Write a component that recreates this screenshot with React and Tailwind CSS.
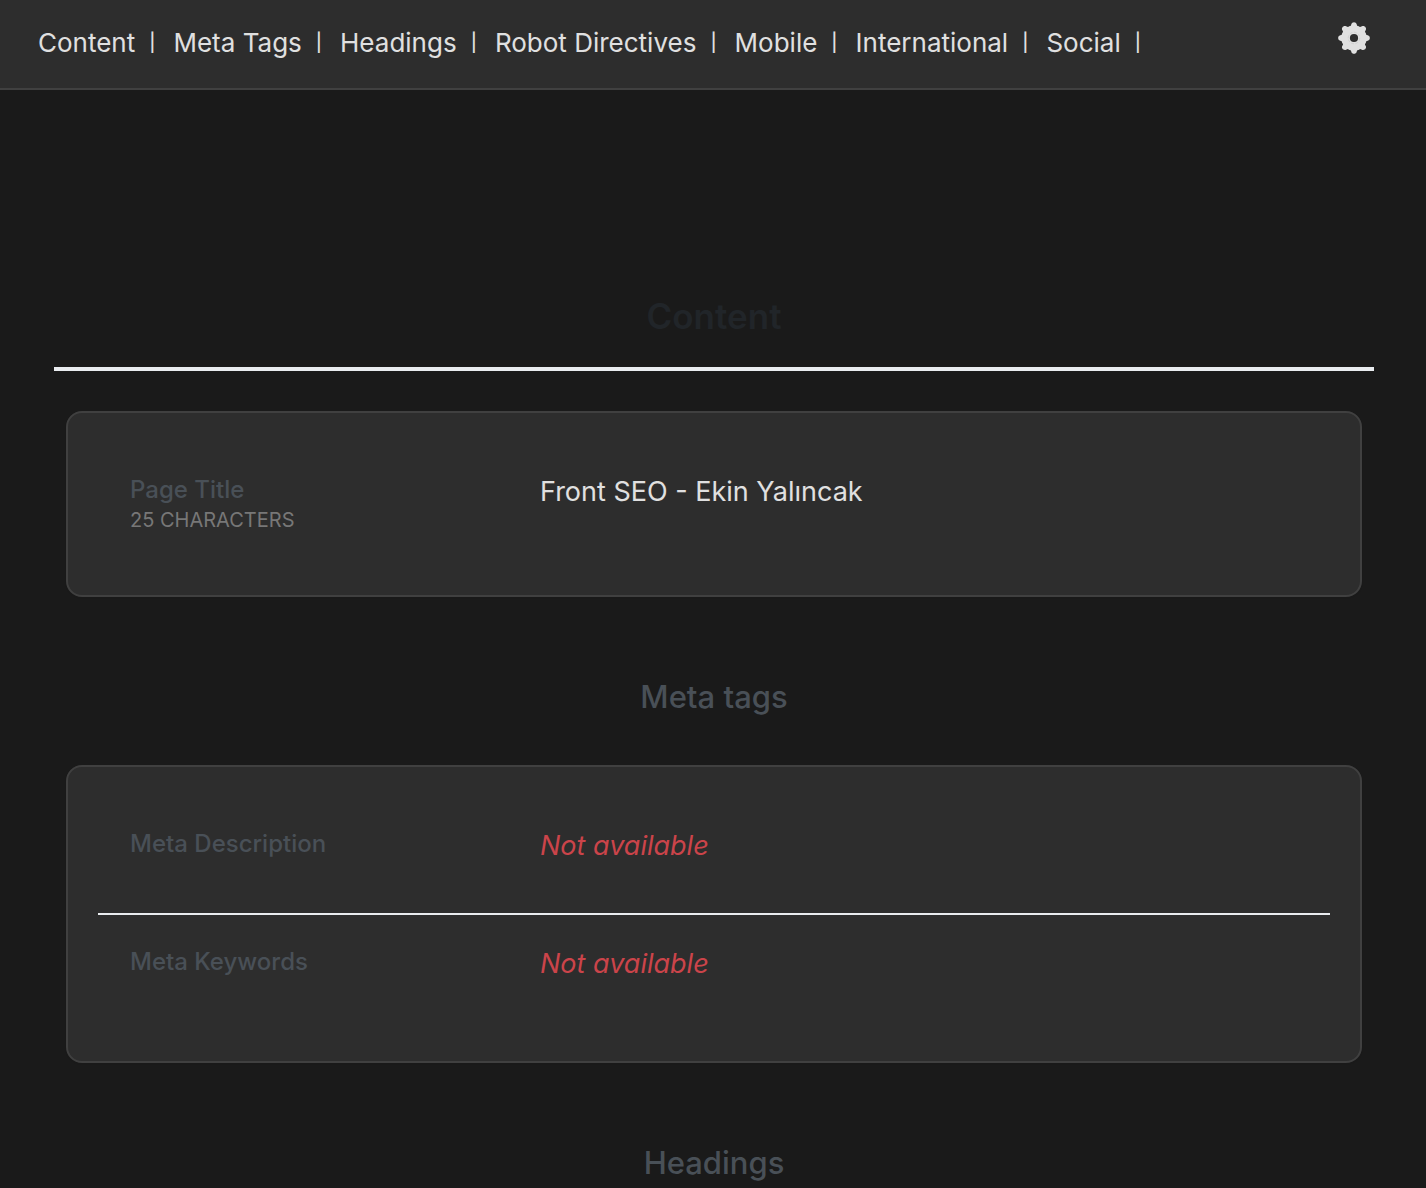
const NAV_ITEMS = [
  { href: '#content', label: 'Content' },
  { href: '#meta-tags', label: 'Meta Tags' },
  { href: '#headings', label: 'Headings' },
  { href: '#robots', label: 'Robot Directives' },
  { href: '#mobile', label: 'Mobile' },
  { href: '#international', label: 'International' },
  { href: '#social', label: 'Social' },
]

const TEETH = [0, 45, 90, 135, 180, 225, 270, 315]

function GearIcon() {
  return (
    <svg viewBox="0 0 32 32" className="size-8" aria-hidden="true">
      <g fill="#e0e0e0">
        {TEETH.map((deg) => (
          <path key={deg} transform={`rotate(${deg} 16 16)`} d="M10.5 5 C12.5 4.6 13 3.8 13.3 2.2 C13.9 -0.5 18.1 -0.5 18.7 2.2 C19 3.8 19.5 4.6 21.5 5 L16 16 Z" />
        ))}
        <circle cx="16" cy="16" r="12.6" />
      </g>
      <circle cx="16" cy="16" r="5.8" fill="none" stroke="#c0c0c0" strokeWidth="0.5" strokeDasharray="3 1.4" />
      <circle cx="16" cy="16" r="4.1" fill="#2d2d2d" />
    </svg>
  )
}

function Card({ children }) {
  return (
    <dl className="mx-3 rounded-2xl border-2 border-[#404040] bg-[#2d2d2d] px-[30px] py-[60px] shadow-xs">
      {children}
    </dl>
  )
}

function Row({ label, note, children }) {
  return (
    <div className="flex min-h-14 px-8 pt-px">
      <dt className="w-[410px] shrink-0 text-2xl font-medium text-[#495057]">
        {label}
        {note && <span className="block text-xl leading-[29px] font-normal text-[#777777] uppercase">{note}</span>}
      </dt>
      <dd className="min-w-0 flex-1 text-[27px] leading-9 text-[#e0e0e0]">{children}</dd>
    </div>
  )
}

function Missing() {
  return <em className="text-[#cb444a]">Not available</em>
}

export default function App() {
  return (
    <div className="min-h-screen bg-[#1a1a1a] font-['Inter',sans-serif] text-[#e0e0e0]">
      {/* Top bar */}
      <header className="flex h-[90px] items-start justify-between border-b-2 border-[#404040] bg-[#2d2d2d] pr-14 pl-[38px]">
        <nav className="flex flex-wrap pt-[25px] text-[26px] leading-9">
          {NAV_ITEMS.map((item) => (
            <span key={item.href} className="mr-[18px] flex items-center gap-3.5">
              <a href={item.href}>{item.label}</a>
              <span className="text-lg font-medium">|</span>
            </span>
          ))}
        </nav>
        <button type="button" aria-label="Settings" className="mt-[22px]">
          <GearIcon />
        </button>
      </header>

      <main className="pt-[200px] pr-[52px] pl-[54px]">
        <section id="content">
          <h1 className="border-b-4 border-[#e9ecef] pt-0.5 pb-[26px] text-center text-[35px] leading-[49px] font-semibold text-[#212529]">
            Content
          </h1>
          <div className="mt-10">
            <Card>
              <Row label="Page Title" note="25 characters">Front SEO - Ekin Yalıncak</Row>
            </Card>
          </div>
        </section>

        <section id="meta-tags">
          <h2 className="mt-20 mb-12 text-center text-[31px] leading-10 font-medium text-[#495057]">Meta tags</h2>
          <Card>
            <Row label="Meta Description"><Missing /></Row>
            <div className="my-[30px] border-t-2 border-[#e9ecef]" />
            <Row label="Meta Keywords"><Missing /></Row>
          </Card>
        </section>

        <section id="headings">
          <h2 className="mt-20 text-center text-[31px] leading-10 font-medium text-[#495057]">Headings</h2>
        </section>
      </main>
    </div>
  )
}
